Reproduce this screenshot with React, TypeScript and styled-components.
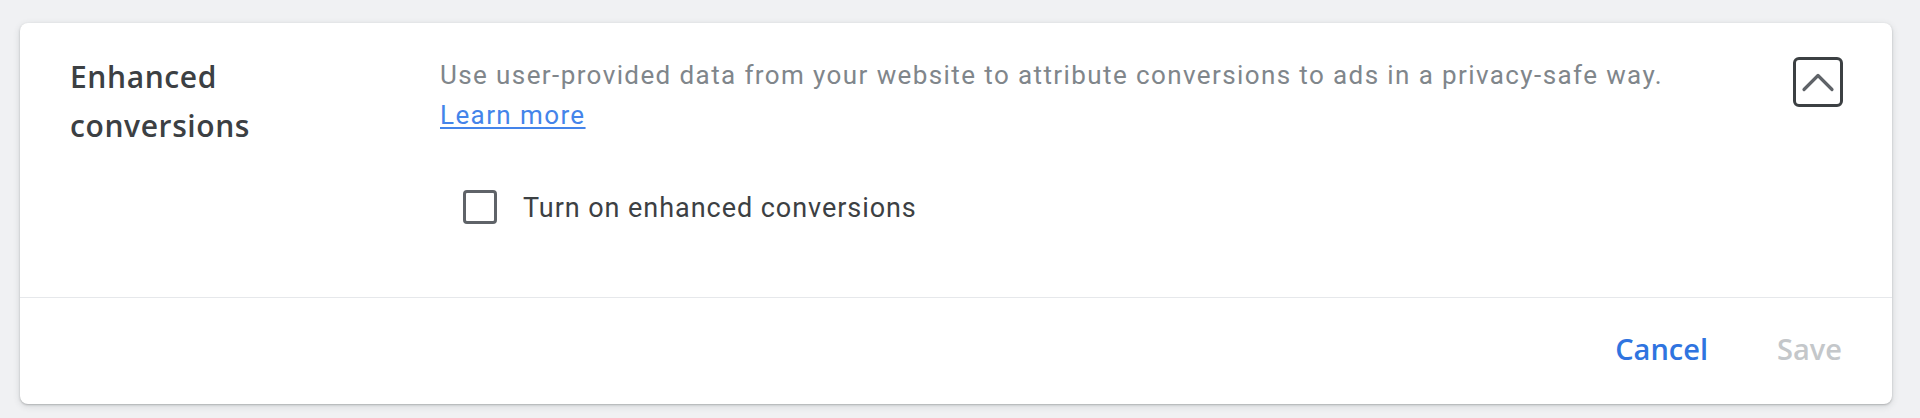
import styled, { createGlobalStyle } from "styled-components";

const GlobalStyle = createGlobalStyle`
  html, body {
    margin: 0;
    padding: 0;
    background: #f0f1f3;
  }
  body {
    font-family: Roboto, "Liberation Sans", Arial, sans-serif;
  }
`;

const Page = styled.div`
  padding: 23px 28px 15px 20px;
`;

const Card = styled.section`
  background: #fff;
  border-radius: 8px;
  box-shadow: 0 1px 2px rgba(60, 64, 67, 0.3), 0 2px 6px 1px rgba(60, 64, 67, 0.12);
`;

const Body = styled.div`
  display: grid;
  grid-template-columns: 370px 1fr auto;
  align-items: start;
  padding: 29px 49px 71px 50px;
  border-bottom: 1px solid #e6e8eb;
`;

const Title = styled.h2`
  margin: 0;
  font-family: "Open Sans", Roboto, sans-serif;
  font-weight: 600;
  font-size: 30px;
  line-height: 49px;
  letter-spacing: 0.6px;
  color: #3c4043;
`;

const Content = styled.div`
  padding-top: 3px;
`;

const Desc = styled.p`
  margin: 0;
  font-size: 26px;
  line-height: 40px;
  letter-spacing: 1.4px;
  color: #80868b;
`;

const Link = styled.a`
  display: block;
  width: max-content;
  color: #4484ea;
  text-decoration: underline;
  text-underline-offset: 3px;
`;

const CheckRow = styled.label`
  display: flex;
  align-items: center;
  gap: 26px;
  margin: 53px 0 0 23px;
  cursor: pointer;
`;

const Box = styled.span`
  width: 34px;
  height: 34px;
  box-sizing: border-box;
  border: 3px solid #5f6368;
  border-radius: 4px;
  flex: none;
`;

const CheckText = styled.span`
  font-size: 27px;
  line-height: 36px;
  letter-spacing: 0.95px;
  color: #3c4043;
  padding-top: 2px;
`;

const Toggle = styled.button`
  width: 50px;
  height: 50px;
  box-sizing: border-box;
  margin-top: 5px;
  padding: 0;
  border: 3px solid #3c4043;
  border-radius: 6px;
  background: #fff;
  display: flex;
  align-items: center;
  justify-content: center;
  cursor: pointer;
`;

const Footer = styled.div`
  display: flex;
  justify-content: flex-end;
  align-items: center;
  gap: 69px;
  padding: 33px 50px 37px;
`;

const Action = styled.button<{ $disabled?: boolean }>`
  border: 0;
  background: none;
  padding: 0;
  font-family: "Open Sans", Roboto, sans-serif;
  font-weight: 600;
  font-size: 29px;
  line-height: 36px;
  color: ${(p) => (p.$disabled ? "#c4c7ca" : "#2f74e0")};
  cursor: ${(p) => (p.$disabled ? "default" : "pointer")};
`;

const App = () => {
  return (
    <>
      <GlobalStyle />
      <Page>
        <Card>
          <Body>
            <Title>
              Enhanced
              <br />
              conversions
            </Title>
            <Content>
              <Desc>
                Use user-provided data from your website to attribute conversions to ads in a
                privacy-safe way.
                <Link href="#">Learn more</Link>
              </Desc>
              <CheckRow>
                <Box />
                <CheckText>Turn on enhanced conversions</CheckText>
              </CheckRow>
            </Content>
            <Toggle aria-label="Collapse">
              <svg width="44" height="44" viewBox="0 0 44 44">
                <path
                  d="M8 29.5 L22 15.5 L36 29.5"
                  fill="none"
                  stroke="#5f6368"
                  strokeWidth="3.2"
                  strokeLinecap="round"
                  strokeLinejoin="round"
                />
              </svg>
            </Toggle>
          </Body>
          <Footer>
            <Action>Cancel</Action>
            <Action $disabled>Save</Action>
          </Footer>
        </Card>
      </Page>
    </>
  );
};

export default App;
